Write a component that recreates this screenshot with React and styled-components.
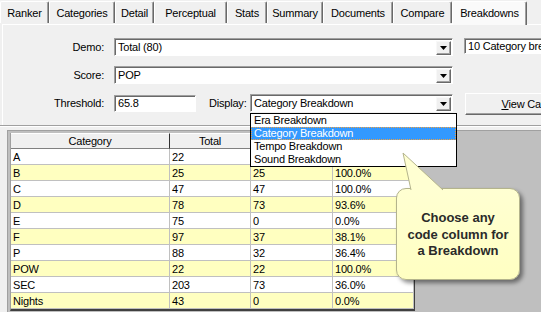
import React from 'react';
import styled, { createGlobalStyle } from 'styled-components';

const GlobalStyle = createGlobalStyle`
  html, body {
    margin: 0;
    padding: 0;
    background: #f0f0f0;
    overflow: hidden;
  }
  body {
    font-family: "Liberation Sans", Arial, sans-serif;
    font-size: 11px;
    color: #000;
  }
`;

const Window = styled.div`
  position: relative;
  width: 541px;
  height: 312px;
  overflow: hidden;
  background: #f0f0f0;
  display: flex;
  flex-direction: column;
`;

const TabBar = styled.div`
  display: flex;
  height: 24px;
  flex-shrink: 0;
`;

const Tab = styled.div`
  width: ${p => p.$w}px;
  height: ${p => (p.$active ? 24 : 22)}px;
  margin-top: 1px;
  box-sizing: border-box;
  flex-shrink: 0;
  display: flex;
  align-items: center;
  justify-content: center;
  padding-top: ${p => (p.$active ? 1 : 0)}px;
  padding-bottom: ${p => (p.$active ? 2 : 0)}px;
  background: ${p => (p.$active ? '#fafafa' : '#f0f0f0')};
  border-top: 1px solid #fff;
  border-left: 1px solid #fff;
  border-right: 1px solid #696969;
  box-shadow: inset -1px 0 0 #a0a0a0;
  border-top-left-radius: 2px;
  border-top-right-radius: 2px;
  position: relative;
  z-index: ${p => (p.$active ? 1 : 0)};
  letter-spacing: -0.2px;
`;

const Page = styled.div`
  height: 101px;
  box-sizing: border-box;
  margin-left: 2px;
  border-top: 1px solid #fff;
  border-left: 1px solid #fff;
  padding-top: 13px;
  display: flex;
  flex-direction: column;
  gap: 10px;
  flex-shrink: 0;
`;

const Row = styled.div`
  display: flex;
  align-items: center;
  height: 18px;
  flex-wrap: nowrap;
`;

const Label = styled.div`
  width: 101px;
  margin-right: 10px;
  text-align: right;
  flex-shrink: 0;
  letter-spacing: -0.2px;
`;

const InlineLabel = styled.div`
  width: 41px;
  margin-left: 13px;
  flex-shrink: 0;
  letter-spacing: -0.2px;
`;

const Combo = styled.div`
  position: relative;
  width: ${p => p.$w}px;
  height: 18px;
  box-sizing: border-box;
  flex-shrink: 0;
  background: #fff;
  border: 1px solid;
  border-color: #a0a0a0 #fff #fff #a0a0a0;
  box-shadow: inset 1px 1px 0 #696969;
  display: flex;
  align-items: center;
  padding: 0 1px 0 3px;
`;

const ComboText = styled.span`
  flex: 1;
  white-space: nowrap;
  letter-spacing: -0.2px;
`;

const DropButton = styled.div`
  width: 15px;
  height: 14px;
  box-sizing: border-box;
  margin-top: 1px;
  background: #f0f0f0;
  border: 1px solid;
  border-color: #f8f8f8 #696969 #696969 #f8f8f8;
  box-shadow: inset -1px -1px 0 #a0a0a0;
  display: flex;
  align-items: center;
  justify-content: center;
`;

const TextBox = styled.div`
  width: ${p => p.$w}px;
  height: ${p => p.$h || 17}px;
  box-sizing: border-box;
  flex-shrink: 0;
  margin-left: ${p => p.$ml || 0}px;
  align-self: ${p => (p.$top ? 'flex-start' : 'center')};
  background: #fff;
  border: 1px solid;
  border-color: #a0a0a0 #fff #fff #a0a0a0;
  box-shadow: inset 1px 1px 0 #696969;
  padding-left: 3px;
  display: flex;
  align-items: center;
  white-space: nowrap;
  overflow: hidden;
  letter-spacing: -0.2px;
`;

const PushButton = styled.div`
  width: 150px;
  height: 22px;
  margin-left: 12px;
  margin-top: 2px;
  box-sizing: border-box;
  flex-shrink: 0;
  background: #f0f0f0;
  border: 1px solid;
  border-color: #fff #696969 #696969 #fff;
  box-shadow: inset -1px -1px 0 #a0a0a0;
  display: flex;
  align-items: center;
  justify-content: center;
  white-space: nowrap;
  letter-spacing: -0.2px;
  u { text-decoration: underline; }
`;

const DropList = styled.div`
  position: absolute;
  top: calc(100% + 2px);
  left: -1px;
  width: 207px;
  box-sizing: border-box;
  background: #fff;
  border: 1px solid #000;
  z-index: 5;
`;

const DropItem = styled.div`
  height: 13px;
  line-height: 13px;
  padding-left: 3px;
  white-space: nowrap;
  letter-spacing: -0.2px;
  background: ${p => (p.$selected ? '#3399ff' : '#fff')};
  color: ${p => (p.$selected ? '#fff' : '#000')};
  outline: ${p => (p.$selected ? '1px dotted #f0a040' : 'none')};
  outline-offset: -1px;
`;

const Divider = styled.div`
  height: 0;
  border-top: 1px solid #a0a0a0;
  border-bottom: 1px solid #fff;
  flex-shrink: 0;
`;

const Workspace = styled.div`
  flex: 1;
  margin: 3px 0 0 7px;
  padding: 2px 0 0 2px;
  background: #bfbfbf;
  border-top: 1px solid #a0a0a0;
  border-left: 1px solid #a0a0a0;
`;

const Grid = styled.div`
  display: grid;
  grid-template-columns: 159px 81px 82px 81px;
  width: max-content;
  border-left: 1px solid #a0a0a0;
  border-right: 1px solid #404040;
  border-bottom: 2px solid #404040;
`;

const HeadCell = styled.div`
  height: 16px;
  box-sizing: border-box;
  background: #f0f0f0;
  border-top: 1px solid #fff;
  border-bottom: 1px solid #808080;
  border-right: 1px solid #303030;
  display: flex;
  align-items: center;
  justify-content: center;
  letter-spacing: -0.2px;
`;

const Cell = styled.div`
  height: 16px;
  box-sizing: border-box;
  padding: 1px 0 0 2px;
  background: ${p => (p.$alt ? '#ffffc0' : '#fff')};
  border-bottom: 1px solid #c0c0c0;
  border-right: 1px solid #c0c0c0;
  display: flex;
  align-items: center;
  white-space: nowrap;
  letter-spacing: -0.2px;
`;

const Callout = styled.div`
  position: absolute;
  left: 396px;
  top: 188px;
  width: 124px;
  height: 92px;
  box-sizing: border-box;
  border-radius: 10px;
  background: linear-gradient(#ffffd2, #ffffc2);
  border: 1px solid #b4b48c;
  box-shadow: 3px 3px 4px rgba(0, 0, 0, 0.45);
  display: flex;
  align-items: center;
  justify-content: center;
  text-align: center;
  font-weight: bold;
  font-size: 13px;
  line-height: 16.5px;
  color: #2a2a2a;
  padding-top: 2px;
  z-index: 6;
`;

const Pointer = styled.svg`
  position: absolute;
  left: -1px;
  top: -37px;
  overflow: visible;
`;

const tabs = [
  ['Ranker', 49],
  ['Categories', 66],
  ['Detail', 39],
  ['Perceptual', 73],
  ['Stats', 40],
  ['Summary', 56],
  ['Documents', 70],
  ['Compare', 59],
  ['Breakdowns', 75],
];

// columns 3 and 4 of the header and of row A sit under the open drop list
const headers = ['Category', 'Total', '', ''];

const rows = [
  ['A', '22', '', ''],
  ['B', '25', '25', '100.0%'],
  ['C', '47', '47', '100.0%'],
  ['D', '78', '73', '93.6%'],
  ['E', '75', '0', '0.0%'],
  ['F', '97', '37', '38.1%'],
  ['P', '88', '32', '36.4%'],
  ['POW', '22', '22', '100.0%'],
  ['SEC', '203', '73', '36.0%'],
  ['Nights', '43', '0', '0.0%'],
];

const options = ['Era Breakdown', 'Category Breakdown', 'Tempo Breakdown', 'Sound Breakdown'];

const Arrow = () => (
  <svg width="7" height="4" viewBox="0 0 7 4">
    <polygon points="0,0 7,0 3.5,4" fill="#000" />
  </svg>
);

const ComboBox = ({ w, value, open }) => (
  <Combo $w={w}>
    <ComboText>{value}</ComboText>
    <DropButton>
      <Arrow />
    </DropButton>
    {open && (
      <DropList>
        {options.map(o => (
          <DropItem key={o} $selected={o === value}>
            {o}
          </DropItem>
        ))}
      </DropList>
    )}
  </Combo>
);

const App = () => (
  <Window>
    <GlobalStyle />
    <TabBar>
      {tabs.map(([name, w]) => (
        <Tab key={name} $w={w} $active={name === 'Breakdowns'}>
          {name}
        </Tab>
      ))}
    </TabBar>
    <Page>
      <Row>
        <Label>Demo:</Label>
        <ComboBox w={339} value="Total (80)" />
        <TextBox $w={120} $h={16} $ml={11} $top>
          10 Category breakdowns
        </TextBox>
      </Row>
      <Row>
        <Label>Score:</Label>
        <ComboBox w={339} value="POP" />
      </Row>
      <Row>
        <Label>Threshold:</Label>
        <TextBox $w={82}>65.8</TextBox>
        <InlineLabel>Display:</InlineLabel>
        <ComboBox w={203} value="Category Breakdown" open />
        <PushButton>
          <u>V</u>iew Categories
        </PushButton>
      </Row>
    </Page>
    <Divider />
    <Workspace>
      <Grid>
        {headers.map((h, i) => (
          <HeadCell key={i}>{h}</HeadCell>
        ))}
        {rows.map((r, i) =>
          r.map((v, j) => (
            <Cell key={`${i}-${j}`} $alt={i % 2 === 1}>
              {v}
            </Cell>
          ))
        )}
      </Grid>
    </Workspace>
    <Callout>
      <Pointer width="50" height="40">
        <polygon points="7,1 15,38 47,38" fill="#ffffd2" />
        <polyline points="15,38 7,1 47,38" fill="none" stroke="#b4b48c" strokeWidth="1" />
      </Pointer>
      <div>
        Choose any
        <br />
        code column for
        <br />
        a Breakdown
      </div>
    </Callout>
  </Window>
);

export default App;
